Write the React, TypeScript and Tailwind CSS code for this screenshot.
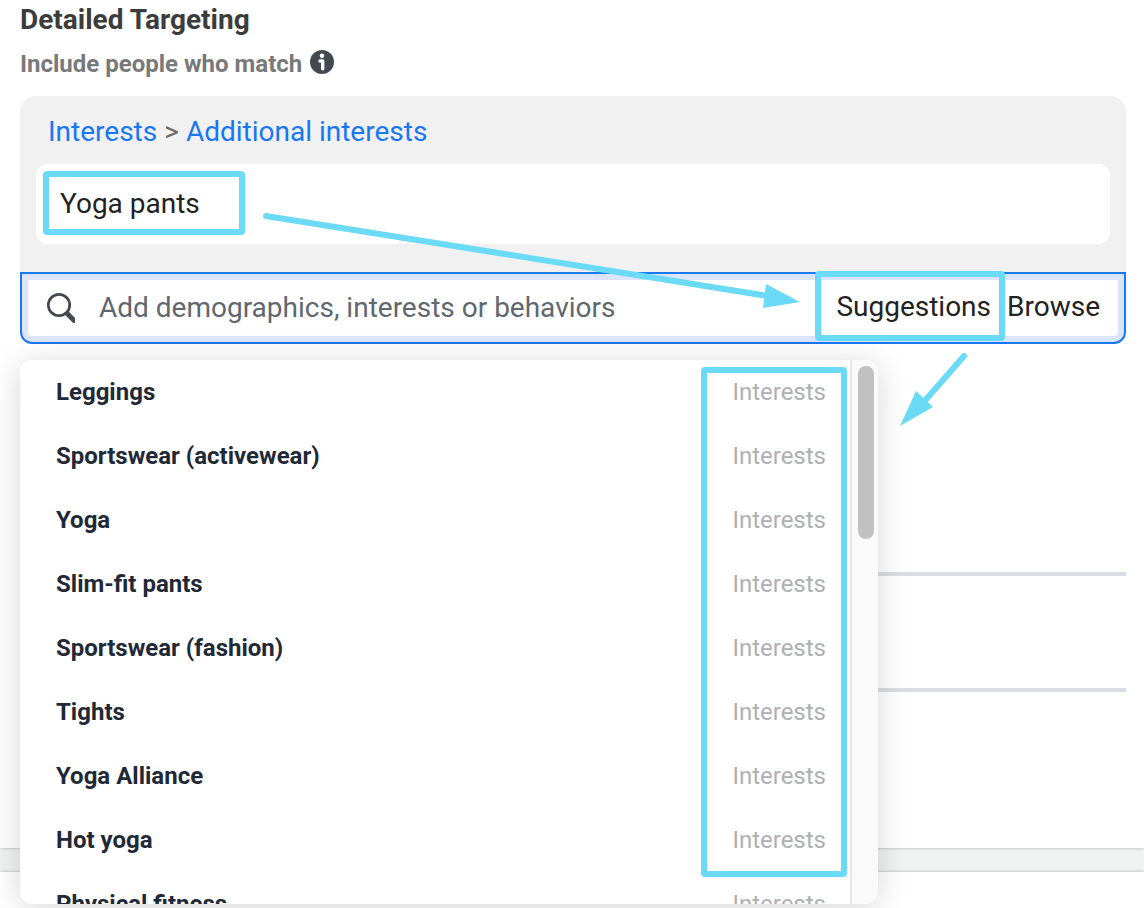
import { useState, ChangeEvent } from "react";

type Suggestion = {
  id: number;
  name: string;
  type: string;
};

const suggestions: Suggestion[] = [
  { id: 1, name: "Leggings", type: "Interests" },
  { id: 2, name: "Sportswear (activewear)", type: "Interests" },
  { id: 3, name: "Yoga", type: "Interests" },
  { id: 4, name: "Slim-fit pants", type: "Interests" },
  { id: 5, name: "Sportswear (fashion)", type: "Interests" },
  { id: 6, name: "Tights", type: "Interests" },
  { id: 7, name: "Yoga Alliance", type: "Interests" },
  { id: 8, name: "Hot yoga", type: "Interests" },
  { id: 9, name: "Physical fitness", type: "Interests" },
];

function InfoIcon() {
  return (
    <svg viewBox="0 0 24 24" className="size-6" aria-hidden="true">
      <circle cx="12" cy="12" r="12" fill="#444950" />
      <circle cx="12" cy="5.8" r="2.3" fill="#fff" />
      <path
        d="M10 11h2.7v7.8"
        fill="none"
        stroke="#fff"
        strokeWidth="3.4"
        strokeLinecap="round"
        strokeLinejoin="round"
      />
    </svg>
  );
}

function SearchIcon() {
  return (
    <svg viewBox="0 0 30 32" className="h-8 w-[30px] shrink-0" aria-hidden="true">
      <circle cx="13" cy="13" r="10.7" fill="none" stroke="#444950" strokeWidth="2.7" />
      <path d="M18.6 22.4L22 18.8L29 26V31H27.2Z" fill="#444950" />
    </svg>
  );
}

// outline drawn over whatever relative element holds it
function Highlight({ className }: { className: string }) {
  return (
    <span
      className={`pointer-events-none absolute rounded border-6 border-[#6adaf7] ${className}`}
    />
  );
}

function SuggestionList() {
  return (
    <div className="absolute top-full left-0 z-10 mt-4 flex h-[544px] w-[858px] max-w-full overflow-hidden rounded-xl bg-white shadow-[0_4px_32px_rgba(0,0,0,0.16)]">
      <div className="relative flex-1">
        <ul>
          {suggestions.map((item) => (
            <li key={item.id}>
              <button
                type="button"
                className="flex h-16 w-full items-center justify-between pr-6 pl-9 text-left text-2xl"
              >
                <span className="font-bold text-[#1f2937]">{item.name}</span>
                <span className="text-[#adb0b4]">{item.type}</span>
              </button>
            </li>
          ))}
        </ul>
        <Highlight className="top-[7px] right-[3px] h-[510px] w-[146px]" />
      </div>
      {/* scrollbar */}
      <div className="w-7 border-l-2 border-[#e6e6e6] bg-[#fafafa] px-[6px] pt-[6px]">
        <div className="h-[173px] w-4 rounded-full bg-[#c1c1c1]" />
      </div>
    </div>
  );
}

function App() {
  const [search, setSearch] = useState("");

  const handleChange = (e: ChangeEvent<HTMLInputElement>) => {
    setSearch(e.target.value);
  };

  return (
    <div className="flex min-h-screen flex-col gap-6 bg-[#f1f3f3] font-[Roboto,sans-serif]">
      <main className="bg-white pr-[18px] pb-[156px] pl-5 shadow-[0_0_3px_rgba(0,0,0,0.3)]">
        <h1 className="text-[28px] leading-10 font-bold text-[#3c3c3c]">
          Detailed Targeting
        </h1>
        <div className="flex gap-2 pt-1 pb-3">
          <label htmlFor="search" className="text-2xl leading-10 font-bold text-[#77797b]">
            Include people who match
          </label>
          <div className="pt-[6px]">
            <InfoIcon />
          </div>
        </div>

        <section className="relative text-[28px] text-[#222222]">
          <div className="rounded-t-2xl bg-[#f1f1f1] px-4 pt-4 pb-7">
            <nav className="flex gap-[7px] px-3 pb-3 leading-10 text-[#1877f2]">
              <a href="#interests">Interests</a>
              <span className="text-[#6b6b6b]">&gt;</span>
              <a href="#additional">Additional interests</a>
            </nav>
            <div className="relative flex h-20 items-center rounded-xl bg-white px-6">
              Yoga pants
              <Highlight className="top-[7px] left-[7px] h-16 w-[202px]" />
            </div>
          </div>

          <div className="relative">
            <div className="rounded-b-xl border-2 border-[#1877f2] bg-[#dae5fb] p-[6px]">
              <div className="flex h-14 items-center rounded-b bg-white px-[18px]">
                <SearchIcon />
                <input
                  id="search"
                  type="text"
                  className="ml-[23px] h-14 min-w-0 flex-1 pb-[2px] outline-none placeholder:text-[#606770]"
                  placeholder="Add demographics, interests or behaviors"
                  value={search}
                  onChange={handleChange}
                />
                <div className="flex gap-4 pb-[2px]">
                  <button type="button">Suggestions</button>
                  <button type="button">Browse</button>
                </div>
              </div>
            </div>
            <Highlight className="-top-px right-[121px] h-[70px] w-[190px]" />
            <SuggestionList />
          </div>

          {/* arrows */}
          <svg
            viewBox="0 0 540 100"
            className="pointer-events-none absolute top-[114px] left-[240px] h-[100px] w-[540px]"
            aria-hidden="true"
          >
            <path d="M6 6L508 86" stroke="#6adaf7" strokeWidth="6" strokeLinecap="round" />
            <path d="M506 74L540 92L503 98Z" fill="#6adaf7" />
          </svg>
          <svg
            viewBox="0 0 68 76"
            className="pointer-events-none absolute top-[255px] right-[158px] z-20 h-[76px] w-[68px]"
            aria-hidden="true"
          >
            <path d="M64 5L22 53" stroke="#6adaf7" strokeWidth="6" strokeLinecap="round" />
            <path d="M16 40L33 56L0 75Z" fill="#6adaf7" />
          </svg>
        </section>

        <hr className="mt-[228px] border-t-4 border-[#dadde1]" />
        <hr className="mt-28 border-t-4 border-[#dadde1]" />
      </main>
      <div className="flex-1 bg-white pt-9 shadow-[0_0_3px_rgba(0,0,0,0.3)]" />
    </div>
  );
}

export default App;
